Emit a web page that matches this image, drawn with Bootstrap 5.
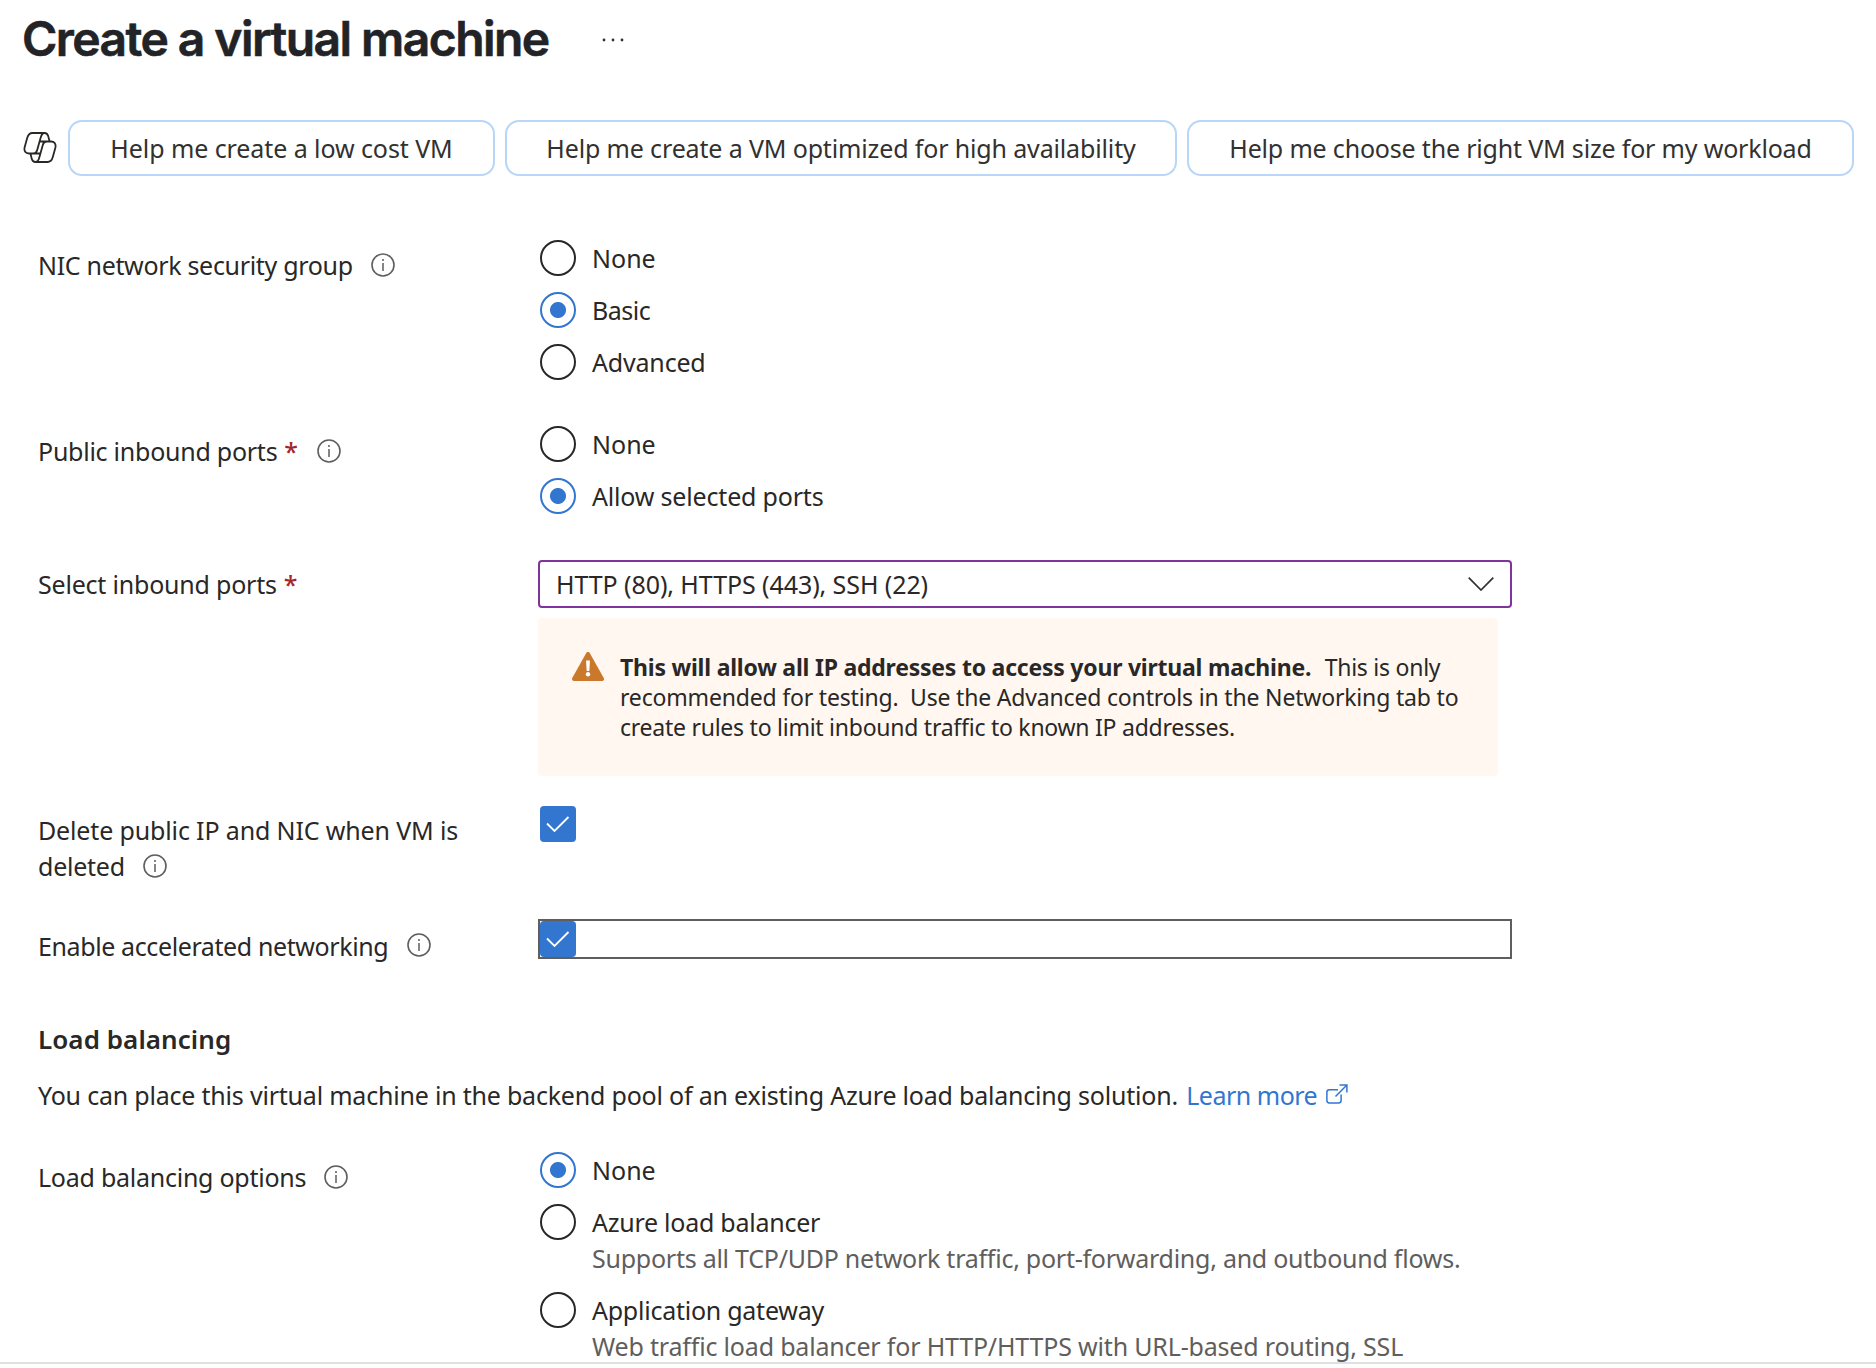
<!DOCTYPE html>
<html lang="en">
<head>
<meta charset="utf-8">
<meta name="viewport" content="width=device-width, initial-scale=1">
<title>Create a virtual machine</title>
<link href="https://cdn.jsdelivr.net/npm/bootstrap@5.3.0/dist/css/bootstrap.min.css" rel="stylesheet">
<style>
body{font-family:"Noto Sans",sans-serif;font-size:25px;line-height:36px;letter-spacing:-.25px;color:#292827;background:#fff;height:1368px;overflow:hidden}
.blade{height:1364px;border-bottom:2px solid #e0e0e0;overflow:hidden}
.blade-head{height:120px;padding-left:22px}
.blade-title{font-family:Inter,sans-serif;font-weight:600;font-size:48px;line-height:58px;letter-spacing:-1.56px;-webkit-text-stroke:.6px #222327;width:526px;white-space:nowrap;margin:10px 0 0;color:#222327}
.more{margin:38px 0 0 53px;width:24px;height:4px}
.prompts{height:56px;padding-left:23px}
.copilot{width:34px;height:34px;margin-right:11px;margin-top:-1px}
.prompt-btn{border:2px solid #b9d6f8;border-radius:14px;height:56px;padding:0;font-size:25px;line-height:36px;color:#323130;background:#fff;white-space:nowrap}
.prompt-cost{width:427px}
.prompt-avail{width:672px;margin-left:10px}
.prompt-size{width:667px;margin-left:10px}
.form-line{padding-left:38px}
.line-label{width:500px;flex:none;white-space:nowrap;padding-top:7px}
.line-field{width:974px;flex:none}
.opts{gap:16px;padding-left:2px}
.form-check-input.opt{width:36px;height:36px;margin:0;border:2px solid #292827;background-color:#fff;flex:none;float:none}
.form-check-input.opt:checked{border-color:#3276cf;background-color:#fff;background-image:radial-gradient(circle,#3276cf 7.5px,transparent 8.5px);background-size:100% 100%}
.opt-text{margin-left:16px;white-space:nowrap}
.form-check-input.tick{width:36px;height:36px;margin:0;border:0;border-radius:4px;float:none;display:block}
.form-check-input.tick:checked{background-color:#3276cf;background-image:url("data:image/svg+xml,%3Csvg xmlns='http://www.w3.org/2000/svg' viewBox='0 0 36 36'%3E%3Cpath fill='none' stroke='%23fff' stroke-width='1.8' d='M7 17.5l7.5 7.5L28.5 11'/%3E%3C/svg%3E");background-size:100% 100%}
.info{width:24px;height:24px;margin:6px 0 0 18px;flex:none}
.req{color:#a4262c;margin-left:7px;font-weight:500}
.req + .info{margin-left:19px}
.picker{height:48px;border:2px solid #7f339d;border-radius:4px;padding:0 16px;background:#fff}
.notice{width:960px;height:158px;margin-top:10px;border-radius:4px;background:#fff7f0;padding:34px 0 0 34px}
.notice-text{font-size:23px;line-height:30px;margin-left:16px;white-space:nowrap}
.notice-text b{letter-spacing:-.225px;margin-right:2px}
.focus-frame{height:40px;border:2px solid #605e5c}
.sub{color:#605e5c;margin-left:52px;white-space:nowrap}
.azlink{color:#3276cf;text-decoration:none;margin-left:2px}
.ext{margin-left:9px;vertical-align:0}
.sect{font-size:26px;font-weight:600;line-height:36px;letter-spacing:.06px;margin-top:57px}
.sect-text{margin-top:20px}
.r-nic{margin-top:64px}
.r-ports,.r-sel{margin-top:46px}
.r-sel .line-label,.r-del .line-label{padding-top:6px}
.r-del{margin-top:30px}
.r-acc{margin-top:35px;height:45px}
.r-acc .line-label{padding-top:9px}
.r-acc .info{margin:5px 0 0 19px}
.r-lb{margin-top:39px}
.ls-0{letter-spacing:0}
.ls-1{letter-spacing:-.08px}
.ls-2{letter-spacing:-.145px}
.ls-3{letter-spacing:-.18px}
.ls-4{letter-spacing:-.205px}
.ls-6{letter-spacing:-.32px}
.ls-7{letter-spacing:-.39px}
.ls-8{letter-spacing:-.5px}
</style>
</head>
<body>
<svg class="d-none"><symbol id="info" viewBox="0 0 24 24"><circle cx="12" cy="12" r="11" fill="none" stroke="#605e5c" stroke-width="1.6"/><path d="M12 10v8M12 6v2" stroke="#605e5c" stroke-width="1.5"/></symbol></svg>
<main class="blade">
  <header class="blade-head d-flex">
    <h1 class="blade-title">Create a virtual machine</h1>
    <svg class="more" viewBox="0 0 24 4" fill="#323130"><circle cx="3" cy="2" r="1.4"/><circle cx="12" cy="2" r="1.4"/><circle cx="21" cy="2" r="1.4"/></svg>
  </header>
  <div class="prompts d-flex align-items-center">
    <svg class="copilot" viewBox="0 0 34 34" fill="none" stroke="#292827" stroke-width="1.8" stroke-linejoin="round"><path d="M21.500 2H9.500C6.500 2 5 4 4.200 7L1.700 16C.7 20 2.500 22.500 6 22.500H10.500C12.500 22.500 13.500 21.500 14.200 19L17.700 6.500C18.500 3.500 19.500 2 21.500 2C24 2 25 3.500 25.600 6.500L26.600 10.500M12.500 31H24.500C27.500 31 29 29 29.800 26L32.300 17C33.300 13 31.500 10.500 28 10.500H23.500C21.500 10.500 20.500 11.500 19.800 14L16.300 26.500C15.500 29.500 14.500 31 12.500 31C10 31 9 29.500 8.400 26.500L7.500 22.500M16.500 10.500H23.500M10.500 22.500H17.500"/></svg>
    <button type="button" class="btn prompt-btn prompt-cost ls-1">Help me create a low cost VM</button>
    <button type="button" class="btn prompt-btn prompt-avail ls-2">Help me create a VM optimized for high availability</button>
    <button type="button" class="btn prompt-btn prompt-size ls-3">Help me choose the right VM size for my workload</button>
  </div>

  <div class="form-line r-nic d-flex">
    <div class="line-label d-flex align-items-start"><span class="ls-6">NIC network security group</span><svg class="info"><use href="#info"/></svg></div>
    <div class="line-field opts d-flex flex-column">
      <label class="d-flex"><input class="form-check-input opt" type="radio" name="nsg"><span class="opt-text ls-0">None</span></label>
      <label class="d-flex"><input class="form-check-input opt" type="radio" name="nsg" checked><span class="opt-text ls-8">Basic</span></label>
      <label class="d-flex"><input class="form-check-input opt" type="radio" name="nsg"><span class="opt-text ls-3">Advanced</span></label>
    </div>
  </div>

  <div class="form-line r-ports d-flex">
    <div class="line-label d-flex align-items-start"><span>Public inbound ports</span><span class="req">*</span><svg class="info"><use href="#info"/></svg></div>
    <div class="line-field opts d-flex flex-column">
      <label class="d-flex"><input class="form-check-input opt" type="radio" name="ports"><span class="opt-text ls-0">None</span></label>
      <label class="d-flex"><input class="form-check-input opt" type="radio" name="ports" checked><span class="opt-text ls-3">Allow selected ports</span></label>
    </div>
  </div>

  <div class="form-line r-sel d-flex">
    <div class="line-label d-flex align-items-start"><span class="ls-4">Select inbound ports</span><span class="req">*</span></div>
    <div class="line-field">
      <div class="picker d-flex align-items-center justify-content-between"><span class="ls-1">HTTP (80), HTTPS (443), SSH (22)</span><svg width="26" height="14" viewBox="0 0 26 14" fill="none" stroke="#323130" stroke-width="1.7"><path d="M.7.7L13 13 25.300.7"/></svg></div>
      <div class="notice d-flex">
        <svg width="32" height="29" viewBox="0 0 32 29"><path d="M16 2L30 27H2z" fill="#ca782c" stroke="#ca782c" stroke-width="4" stroke-linejoin="round"/><path d="M14 8.500h4l-.7 10.500h-2.600z" fill="#fff"/><circle cx="16" cy="22.300" r="2.200" fill="#fff"/></svg>
        <div class="notice-text"><b>This will allow all IP addresses to access your virtual machine.</b>&nbsp; This is only<br><span class="ls-3">recommended for testing.&nbsp; Use the Advanced controls in the Networking tab to</span><br>create rules to limit inbound traffic to known IP addresses.</div>
      </div>
    </div>
  </div>

  <div class="form-line r-del d-flex">
    <div class="line-label"><span class="ls-2">Delete public IP and NIC when VM is</span><div class="d-flex"><span>deleted</span><svg class="info"><use href="#info"/></svg></div></div>
    <div class="line-field opts"><input class="form-check-input tick" type="checkbox" checked></div>
  </div>

  <div class="form-line r-acc d-flex">
    <div class="line-label d-flex align-items-start"><span class="ls-7">Enable accelerated networking</span><svg class="info"><use href="#info"/></svg></div>
    <div class="line-field focus-frame"><input class="form-check-input tick" type="checkbox" checked></div>
  </div>

  <h2 class="form-line sect mb-0">Load balancing</h2>
  <p class="form-line sect-text mb-0 text-nowrap"><span class="ls-4">You can place this virtual machine in the backend pool of an existing Azure load balancing solution.</span> <a class="azlink" href="#"><span class="ls-8">Learn more</span><svg class="ext" width="22" height="21" viewBox="0 0 22 21" fill="none" stroke="#3276cf" stroke-width="1.5"><path d="M12 5.800H3.300Q.9 5.800.9 8.200V16.600Q.9 19 3.300 19H12.700Q15.100 19 15.100 16.600V10.500M9.500 12.500L20.700 1.200M13.500 1H20.900V8.400"/></svg></a></p>

  <div class="form-line r-lb d-flex">
    <div class="line-label d-flex align-items-start"><span>Load balancing options</span><svg class="info"><use href="#info"/></svg></div>
    <div class="line-field opts d-flex flex-column">
      <label class="d-flex"><input class="form-check-input opt" type="radio" name="lb" checked><span class="opt-text ls-0">None</span></label>
      <div>
        <label class="d-flex"><input class="form-check-input opt" type="radio" name="lb"><span class="opt-text">Azure load balancer</span></label>
        <div class="sub">Supports all TCP/UDP network traffic, port-forwarding, and outbound flows.</div>
      </div>
      <div>
        <label class="d-flex"><input class="form-check-input opt" type="radio" name="lb"><span class="opt-text">Application gateway</span></label>
        <div class="sub ls-3">Web traffic load balancer for HTTP/HTTPS with URL-based routing, SSL</div>
      </div>
    </div>
  </div>
</main>
<script src="https://cdn.jsdelivr.net/npm/bootstrap@5.3.0/dist/js/bootstrap.bundle.min.js"></script>
</body>
</html>
